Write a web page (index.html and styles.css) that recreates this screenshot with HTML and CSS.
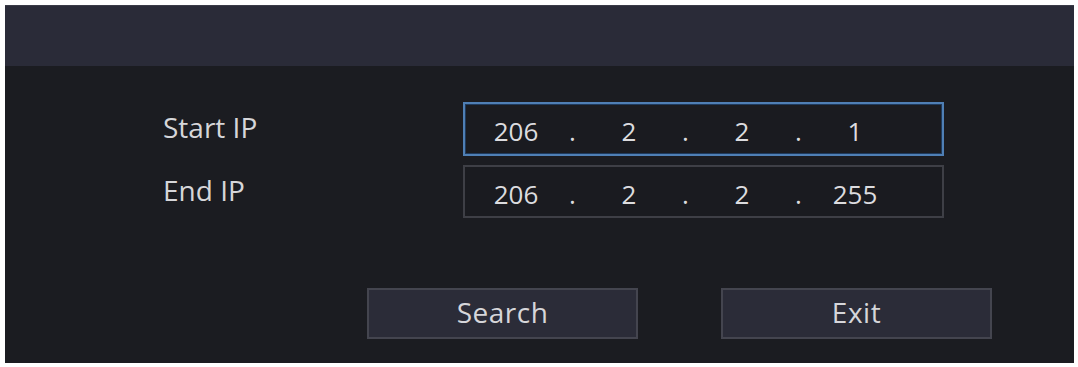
FILE: index.html
```html
<!DOCTYPE html>
<html>
<head>
<meta charset="utf-8">
<link rel="stylesheet" href="styles.css">
</head>
<body>
<div class="panel">
  <div class="header"></div>
  <div class="content">
    <div class="form">
      <div class="label">Start IP</div>
      <div class="ipbox active">
        <span class="seg">206</span><span class="dot">.</span><span class="seg">2</span><span class="dot">.</span><span class="seg">2</span><span class="dot">.</span><span class="seg">1</span>
      </div>
      <div class="label">End IP</div>
      <div class="ipbox">
        <span class="seg">206</span><span class="dot">.</span><span class="seg">2</span><span class="dot">.</span><span class="seg">2</span><span class="dot">.</span><span class="seg">255</span>
      </div>
    </div>
    <div class="actions">
      <button class="btn">Search</button>
      <button class="btn">Exit</button>
    </div>
  </div>
</div>
</body>
</html>
```
FILE: styles.css
```css
html, body {
  margin: 0;
  padding: 0;
  background: #ffffff;
}
body {
  padding: 5px 4px 4px 5px;
  font-family: "Open Sans", "Noto Sans", sans-serif;
}
.panel {
  width: 1069px;
  height: 358px;
  background: #1b1c21;
  display: flex;
  flex-direction: column;
}
.header {
  height: 61px;
  background: #2a2b38;
  border-top: 1px solid #3a3b47;
  box-sizing: border-box;
}
.content {
  flex: 1;
  padding: 36px 0 0 158px;
}
.form {
  display: grid;
  grid-template-columns: 300px 481px;
  grid-template-rows: 54px 53px;
  row-gap: 9px;
  align-items: center;
}
.label {
  color: #d6d6d9;
  font-size: 28px;
  line-height: 1;
  padding-bottom: 4px;
}
.ipbox {
  height: 100%;
  box-sizing: border-box;
  border: 2px solid #3e3f46;
  background: #1a1b20;
  display: flex;
  align-items: center;
  padding: 4px 0 0 6px;
  color: #dcdcdf;
  font-size: 26px;
  line-height: 1;
}
.ipbox.active {
  border-color: #4f7fb5;
  box-shadow: inset 0 0 0 1px #1f3a5c;
}
.seg {
  width: 90px;
  text-align: center;
}
.dot {
  width: 23px;
  text-align: center;
}
.actions {
  display: flex;
  gap: 83px;
  margin: 70px 0 0 204px;
}
.btn {
  width: 271px;
  height: 51px;
  background: #2b2c38;
  border: 2px solid #44454f;
  color: #d6d6da;
  font-family: "Open Sans", "Noto Sans", sans-serif;
  font-size: 28px;
  line-height: 1;
  padding: 0 0 3px;
  letter-spacing: 0.5px;
}
```
